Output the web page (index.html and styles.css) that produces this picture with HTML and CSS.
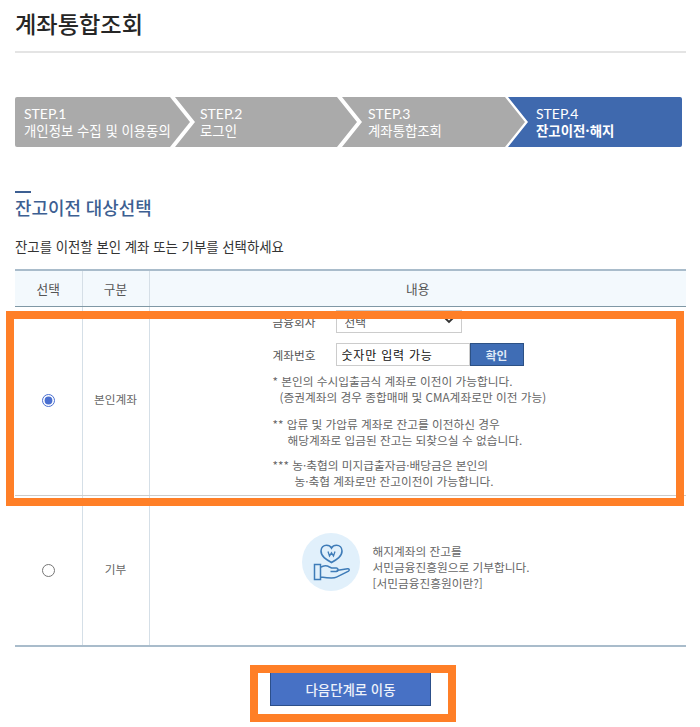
FILE: index.html
```html
<!DOCTYPE html>
<html lang="ko">
<head>
<meta charset="utf-8">
<title>계좌통합조회</title>
<link rel="stylesheet" href="styles.css">
</head>
<body>
<div class="page">
  <h1 class="title">계좌통합조회</h1>
  <ol class="steps">
    <li class="step step1"><span class="no">STEP.1</span><span class="nm">개인정보 수집 및 이용동의</span></li>
    <li class="step step2"><span class="no">STEP.2</span><span class="nm">로그인</span></li>
    <li class="step step3"><span class="no">STEP.3</span><span class="nm">계좌통합조회</span></li>
    <li class="step step4"><span class="no">STEP.4</span><b class="nm">잔고이전·해지</b></li>
  </ol>
  <h2 class="section">잔고이전 대상선택</h2>
  <p class="lead">잔고를 이전할 본인 계좌 또는 기부를 선택하세요</p>
  <table class="grid">
    <colgroup><col class="c1"><col class="c2"><col></colgroup>
    <thead>
      <tr><th>선택</th><th>구분</th><th>내용</th></tr>
    </thead>
    <tbody>
      <tr class="row-own">
        <td class="cell-mid"><input type="radio" name="target" checked></td>
        <td class="cell-mid">본인계좌</td>
        <td class="detail">
          <div class="form-row clip">
            <label class="lbl">금융회사</label>
            <span class="sel-wrap">
              <select class="sel"><option>선택</option></select>
              <svg class="chev" width="10" height="7" viewBox="0 0 10 7" aria-hidden="true"><path d="M1 1l4 4 4-4" fill="none" stroke="#333" stroke-width="1.800"/></svg>
            </span>
          </div>
          <div class="form-row">
            <label class="lbl">계좌번호</label>
            <input class="acct" type="text" value="숫자만 입력 가능">
            <button class="ok" type="button">확인</button>
          </div>
          <p class="note">* 본인의 수시입출금식 계좌로 이전이 가능합니다.<br><span class="i1">(증권계좌의 경우 종합매매 및 CMA계좌로만 이전 가능)</span></p>
          <p class="note">** 압류 및 가압류 계좌로 잔고를 이전하신 경우<br><span class="i2">해당계좌로 입금된 잔고는 되찾으실 수 없습니다.</span></p>
          <p class="note">*** 농·축협의 미지급출자금·배당금은 본인의<br><span class="i3">농·축협 계좌로만 잔고이전이 가능합니다.</span></p>
        </td>
      </tr>
      <tr class="row-give">
        <td class="cell-give"><input type="radio" name="target"></td>
        <td class="cell-give">기부</td>
        <td>
          <div class="give">
            <svg class="give-icon" width="58" height="58" viewBox="0 0 58 58" aria-hidden="true">
              <circle cx="29" cy="29" r="29" fill="#e1f0fb"/>
              <path d="M29.500 29.500C24 26.500 19 23.500 19 18c0-3.500 2.500-5.800 5.500-5.800 2.200 0 4 1 5 2.800 1-1.800 2.800-2.800 5-2.800 3 0 5.500 2.300 5.500 5.800 0 5.500-5 8.500-10.500 11.500z" fill="none" stroke="#3f7cb8" stroke-width="1.600"/>
              <path d="M26 18.500l1.500 4.500 2-3.200 2 3.200 1.500-4.500" fill="none" stroke="#3f7cb8" stroke-width="1.300"/>
              <path d="M12.500 31.500h6v15h-6zM18.500 34.500c2.500-1.800 6-2.200 9-.5l2 1h5c2 0 2 3.500 0 3.500h-6M34.500 37.500l11-1.800c1.800-.2 2.300 1.500 1 2.500l-12 6c-3 1.500-8 1-15.500-.2" fill="none" stroke="#3f7cb8" stroke-width="1.500"/>
            </svg>
            <p class="give-text">해지계좌의 잔고를<br>서민금융진흥원으로 기부합니다.<br>[서민금융진흥원이란?]</p>
          </div>
        </td>
      </tr>
    </tbody>
  </table>
  <div class="actions"><button class="next" type="button">다음단계로 이동</button></div>
  <div class="mark mark-row"></div>
  <div class="mark mark-btn"></div>
</div>
</body>
</html>
```

FILE: styles.css
```css
* { box-sizing: border-box; }
html, body { margin: 0; padding: 0; background: #fff; }
body { font-family: "Noto Sans CJK KR", "Noto Sans", sans-serif; color: #666; overflow: hidden; }
.page { position: relative; width: 700px; height: 727px; padding: 0 14px 0 15px; }
.title { margin: 0; height: 53px; padding-top: 7px; border-bottom: 2px solid #e4e4e4; font-size: 23.2px; line-height: 32px; font-weight: 500; color: #262626; }
.steps { list-style: none; display: flex; margin: 44px 0 0; padding: 0; height: 50px; width: 667px; }
.step { height: 50px; padding-top: 9px; background: #aaa; color: #fff; font-size: 13.4px; margin-right: -15px; clip-path: polygon(0 0, calc(100% - 20px) 0, 100% 50%, calc(100% - 20px) 100%, 0 100%, 20px 50%); }
.no, .nm { display: block; height: 16px; line-height: 16px; font-weight: 400; white-space: nowrap; }
.no { font-family: Lato, sans-serif; font-size: 14px; }
.step1 { width: 175px; padding-left: 9px; border-radius: 2px 0 0 2px; clip-path: polygon(0 0, calc(100% - 20px) 0, 100% 50%, calc(100% - 20px) 100%, 0 100%); }
.step2 { width: 182px; padding-left: 25px; }
.step3 { width: 183px; padding-left: 26px; margin-right: -17px; }
.step4 { width: 174px; padding-left: 28px; margin-right: 0; background: #3f69ae; border-radius: 0 2px 2px 0; clip-path: polygon(0 0, 100% 0, 100% 100%, 0 100%, 20px 50%); }
.step4 .nm { font-weight: 700; }
.section { position: relative; margin: 44px 0 0; padding-top: 4px; font-size: 17.9px; line-height: 24px; font-weight: 500; color: #3d5f92; }
.section::before { content: ""; position: absolute; left: 0; top: 0; width: 16px; height: 2px; background: #3d5f92; }
.lead { margin: 18px 0 0; font-size: 13.4px; line-height: 18px; color: #333; }
.grid { width: 671px; margin-top: 14px; border-collapse: collapse; table-layout: fixed; border-top: 2px solid #a9bccb; border-bottom: 2px solid #a9bccb; font-size: 11.7px; }
.c1 { width: 67px; }
.c2 { width: 67px; }
.grid th { height: 36px; padding: 0; background: #f3f9fd; font-size: 12.700px; font-weight: 400; color: #555; border-bottom: 1px solid #7f98a5; border-left: 1px solid #d5dfe7; }
.grid th:first-child, .grid td:first-child { border-left: 0; }
.grid td { padding: 0; text-align: center; vertical-align: middle; border-left: 1px solid #d5dfe7; }
.grid td.cell-mid { padding-bottom: 5px; }
.grid td.cell-give { padding-bottom: 3px; }
.grid td input[type="radio"] { margin: 0; accent-color: #4a6fd0; vertical-align: middle; }
.row-own { height: 189px; }
.row-own td { border-bottom: 1px solid #ccc; }
.row-give { height: 151px; }
.grid td.detail { padding: 0 0 0 123px; text-align: left; vertical-align: top; height: 189px; }
.form-row { display: flex; align-items: center; height: 23px; margin-top: 10px; }
.form-row.clip { margin-top: 3px; }
.lbl { width: 63px; font-size: 11.700px; color: #555; }
.sel-wrap { position: relative; display: block; width: 126px; height: 23px; }
.sel { display: block; width: 126px; height: 23px; padding: 0 8px; border: 1px solid #ccc; background: #fff; appearance: none; font: 11.7px "Noto Sans CJK KR", sans-serif; color: #555; }
.chev { position: absolute; right: 8px; top: 7px; }
.acct { width: 134px; height: 23px; padding: 0 5px; border: 1px solid #ccc; font: 400 12px "Noto Sans CJK KR", sans-serif; letter-spacing: .8px; color: #111; }
.ok { width: 54px; height: 23px; padding: 0; border: 1px solid #2c5185; background: #3f6db5; color: #dfe8f5; font: 700 11.7px "Noto Sans CJK KR", sans-serif; }
.note { margin: 7px 0 0; line-height: 16px; font-size: 11.700px; color: #666; }
.note + .note { margin-top: 11px; }
.note + .note + .note { margin-top: 9px; }
.i1 { padding-left: 7px; }
.i2 { padding-left: 15px; }
.i3 { padding-left: 22px; }
.give { display: flex; align-items: center; gap: 13px; padding: 0 0 16px 152px; text-align: left; }
.give-icon { flex: none; }
.give-text { margin: 10px 0 0; line-height: 16px; font-size: 11.700px; color: #666; }
.actions { display: flex; justify-content: center; margin-top: 24px; }
.next { width: 161px; height: 35px; padding: 0; border: 1px solid #2c4f8a; background: #4771c5; color: #eef2fa; font: 500 13.400px "Noto Sans CJK KR", sans-serif; }
.mark { position: absolute; border: 8px solid #ff7f27; pointer-events: none; }
.mark-row { left: 6px; top: 311px; width: 678px; height: 195px; }
.mark-btn { left: 250px; top: 665px; width: 206px; height: 57px; }
```
